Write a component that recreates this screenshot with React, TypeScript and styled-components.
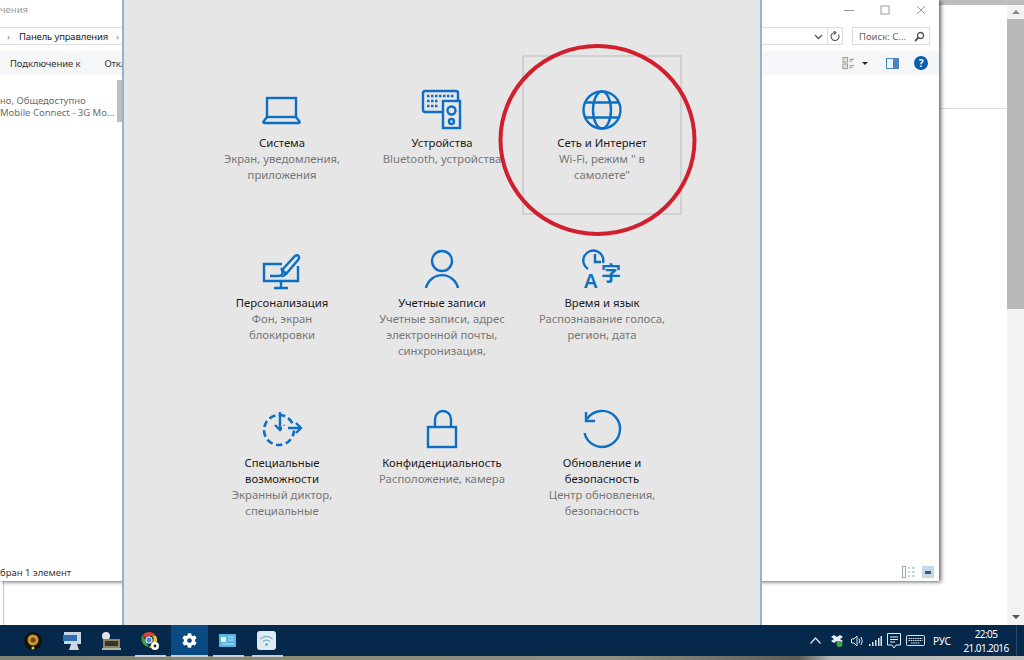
import React from "react";
import styled, { createGlobalStyle } from "styled-components";
import { FaCog } from "react-icons/fa";

const Global = createGlobalStyle`
  html, body { margin: 0; padding: 0; width: 1024px; height: 660px; overflow: hidden; background: #fff; }
  body { font-family: "Noto Sans", "Liberation Sans", sans-serif; font-size: 12px; }
  * { box-sizing: border-box; }
`;

const BLUE = "#0d6fc4";

const Page = styled.div`
  width: 1024px;
  height: 660px;
  display: flex;
  flex-direction: column;
  overflow: hidden;
`;
const Desktop = styled.div`
  position: relative;
  height: 625px;
  background: #fff;
  overflow: hidden;
`;
const BackTopStrip = styled.div`
  position: absolute;
  left: 939px;
  top: 0;
  width: 85px;
  height: 5px;
  background: #bdbdbd;
`;
const BackDivider = styled.div`
  position: absolute;
  left: 939px;
  top: 108px;
  width: 68px;
  height: 1px;
  background: #dcdcdc;
`;
const BackScrollbar = styled.div`
  position: absolute;
  left: 1007px;
  top: 5px;
  width: 17px;
  height: 620px;
  background: #f3f3f3;
  display: flex;
  flex-direction: column;
  align-items: center;
`;
const ScrollArrow = styled.div<{ $down?: boolean }>`
  width: 0;
  height: 0;
  margin: ${(p) => (p.$down ? "auto 0 6px" : "5px 0 5px")};
  border-left: 4px solid transparent;
  border-right: 4px solid transparent;
  ${(p) => (p.$down ? "border-top: 4px solid #555;" : "border-bottom: 4px solid #888;")}
`;
const ScrollThumb = styled.div`
  width: 100%;
  height: 290px;
  background: #b9b9b9;
`;
const BackEdge = styled.div`
  position: absolute;
  left: 3px;
  top: 581px;
  width: 1px;
  height: 44px;
  background: #c9c9c9;
`;

const Explorer = styled.section`
  position: absolute;
  left: 0;
  top: 0;
  width: 939px;
  height: 581px;
  background: #fff;
  box-shadow: 2px 1px 4px rgba(0, 0, 0, 0.6);
  display: flex;
  flex-direction: column;
  overflow: hidden;
  color: #1e1e1e;
`;
const TitleBar = styled.div`
  height: 27px;
  flex: none;
  display: flex;
  align-items: flex-start;
  justify-content: space-between;
  padding: 3px 11px 0 0;
`;
const TitleText = styled.span`
  font-size: 9.5px;
  line-height: 14px;
  color: #999;
`;
const WindowControls = styled.div`
  display: flex;
  gap: 22px;
  color: #9a9a9a;
`;
const AddressRow = styled.div`
  height: 18px;
  flex: none;
  display: flex;
  gap: 9px;
  padding-right: 9px;
`;
const AddressBox = styled.div`
  flex: 1;
  display: flex;
  align-items: center;
  border: 1px solid #dcdcdc;
  border-left: none;
  font-size: 9.5px;
  padding-left: 7px;
  gap: 8px;
`;
const Crumb = styled.span`
  color: #222;
  letter-spacing: -0.15px;
  margin-left: 1px;
`;
const CrumbSep = styled.span`
  color: #777;
`;
const AddressEnd = styled.div`
  margin-left: auto;
  display: flex;
  align-items: center;
  height: 100%;
`;
const RefreshCell = styled.div`
  margin-left: 4px;
  width: 15px;
  height: 100%;
  border-left: 1px solid #dcdcdc;
  display: flex;
  align-items: center;
  justify-content: center;
`;
const SearchBox = styled.div`
  width: 78px;
  border: 1px solid #dcdcdc;
  display: flex;
  align-items: center;
  justify-content: space-between;
  padding: 0 4px 0 6px;
  font-size: 9.5px;
  color: #666;
`;
const Toolbar = styled.div`
  margin-top: 6px;
  height: 24px;
  flex: none;
  display: flex;
  align-items: center;
  gap: 24px;
  padding: 0 11px 0 10px;
  background: #f5f6f7;
  font-size: 9.5px;
  letter-spacing: -0.1px;
  color: #333;
`;
const ToolbarEnd = styled.div`
  margin-left: auto;
  display: flex;
  align-items: center;
  gap: 6px;
`;
const Caret = styled.div`
  width: 0;
  height: 0;
  margin: 0 12px 0 1px;
  border-left: 3px solid transparent;
  border-right: 3px solid transparent;
  border-top: 3px solid #222;
`;
const HelpBadge = styled.div`
  margin-left: 9px;
  width: 14px;
  height: 14px;
  border-radius: 50%;
  background: #0b5cad;
  color: #fff;
  font-size: 10px;
  font-weight: 700;
  line-height: 14px;
  text-align: center;
`;
const FileList = styled.div`
  flex: 1;
  position: relative;
  padding-top: 20px;
  font-size: 9.5px;
  line-height: 12px;
  color: #6d6d6d;
`;
const FileLine = styled.div`
  white-space: nowrap;
`;
const ListThumb = styled.div`
  position: absolute;
  left: 117px;
  top: 5px;
  width: 5px;
  height: 42px;
  background: #bdbdbd;
`;
const StatusBar = styled.div`
  height: 18px;
  flex: none;
  display: flex;
  align-items: center;
  justify-content: space-between;
  padding-right: 5px;
  font-size: 9.5px;
  color: #333;
`;
const StatusIcons = styled.div`
  display: flex;
  gap: 7px;
`;

const SettingsWindow = styled.section`
  position: absolute;
  left: 122px;
  top: 0;
  width: 640px;
  height: 625px;
  background: #e6e6e6;
  border-left: 2px solid #8fb6d0;
  border-right: 2px solid #8fb6d0;
  padding: 55px 0 0 78px;
`;
const TileGrid = styled.div`
  display: grid;
  grid-template-columns: repeat(3, 160px);
  grid-auto-rows: 160px;
`;
const Tile = styled.div<{ $selected?: boolean }>`
  padding-top: 35px;
  display: flex;
  flex-direction: column;
  align-items: center;
  outline: ${(p) => (p.$selected ? "2px solid #d0d0d0" : "none")};
  outline-offset: -2px;
  text-align: center;
  font-size: 11.3px;
  line-height: 16px;
  white-space: nowrap;
`;
const TileIcon = styled.svg`
  width: 40px;
  height: 40px;
  margin-bottom: 5px;
  flex: none;
  fill: none;
  overflow: visible;
  stroke: ${BLUE};
  stroke-width: 2.4;
`;
const TileTitle = styled.div`
  color: #1c1c1c;
`;
const TileDesc = styled.div`
  color: #777;
`;
const Annotation = styled.svg`
  position: absolute;
  left: 490px;
  top: 35px;
  width: 220px;
  height: 210px;
  fill: none;
  pointer-events: none;
`;

const Taskbar = styled.footer`
  height: 31px;
  flex: none;
  background: #06284a;
  display: flex;
  align-items: stretch;
  padding-left: 13px;
  color: #fff;
`;
const Slot = styled.div<{ $active?: boolean; $running?: boolean }>`
  position: relative;
  width: ${(p) => (p.$active ? "37px" : "39px")};
  margin-left: ${(p) => (p.$active ? "2px" : "0")};
  display: flex;
  align-items: center;
  justify-content: center;
  background: ${(p) => (p.$active ? "#0a4a82" : "transparent")};
  ${(p) =>
    p.$running || p.$active
      ? `&::after {
    content: "";
    position: absolute;
    left: ${p.$active ? "0" : "5px"};
    right: ${p.$active ? "0" : "3px"};
    bottom: -1px;
    height: 2px;
    background: #c8d0d6;
  }`
      : ""}
`;
const Tray = styled.div`
  margin-left: auto;
  display: flex;
  align-items: center;
  gap: 5px;
`;
const TrayChevron = styled.svg`
  margin-right: 5px;
`;
const TrayBadge = styled.svg`
  margin-right: 3px;
`;
const TrayLang = styled.span`
  font-size: 10px;
  margin: 0 5px 0 3px;
`;
const Clock = styled.div`
  width: 50px;
  text-align: center;
  font-size: 10px;
  letter-spacing: -0.6px;
  line-height: 14px;
  white-space: nowrap;
`;
const ShowDesktop = styled.div`
  width: 8px;
  align-self: stretch;
  border-left: 1px solid #2b4a68;
`;
const Wallpaper = styled.div`
  height: 4px;
  flex: none;
  background: linear-gradient(90deg, #7d8176 0%, #8b8d74 30%, #8d8f82 60%, #5d5d58 78%, #b4b6b3 81%, #c1c2bf 100%);
`;

const Laptop = () => (
  <TileIcon viewBox="0 0 40 40">
    <rect x="5" y="8" width="29" height="19" />
    <path d="M5 27 L1.5 31.5 Q1 33 2.5 33 H36.5 Q38 33 37.5 31.5 L34 27" />
  </TileIcon>
);
const Devices = () => (
  <TileIcon viewBox="0 0 40 40">
    <path d="M20 22 H3 Q1 22 1 20 V3 Q1 1 3 1 H34 Q36 1 36 3 V10" />
    <rect x="21" y="11" width="17" height="27" />
    <circle cx="29.5" cy="20.5" r="4" />
    <circle cx="29.5" cy="31.5" r="2.5" />
    <path d="M5 6 H32 M5 11 H17 M5 16 H17" strokeDasharray="2.5 1.5" />
  </TileIcon>
);
const Globe = () => (
  <TileIcon viewBox="0 0 40 40">
    <circle cx="20" cy="20" r="18.5" />
    <ellipse cx="20" cy="20" rx="9" ry="18.5" />
    <path d="M4 12.5 H36 M4 27.5 H36" />
  </TileIcon>
);
const Brush = () => (
  <TileIcon viewBox="0 0 40 40">
    <path d="M20 14 H2 V31 H36 V16" />
    <path d="M19 38 V31 M12 38 H26" />
    <path d="M8 26 H16 Q22 26 20 20 L33 6 Q36 4 37 7 Q37.5 8 36 10 L24 24 Q20 27 20 26" />
    <path d="M19 18 L24 24" />
  </TileIcon>
);
const Person = () => (
  <TileIcon viewBox="0 0 40 40">
    <circle cx="20" cy="11" r="10" />
    <path d="M4 38 A16.5 17 0 0 1 36 38" />
  </TileIcon>
);
const TimeLang = () => (
  <TileIcon viewBox="0 0 40 40">
    <path d="M6 19 A10 10 0 1 1 21 13" />
    <path d="M13 4 V12 H19" />
    <text x="2" y="38" fontSize="20" fontWeight="600" fill={BLUE} stroke="none" fontFamily="Noto Sans, sans-serif">A</text>
    <text x="19" y="31" fontSize="20" fontWeight="700" fill={BLUE} stroke="none" fontFamily="Noto Sans CJK SC, sans-serif">字</text>
  </TileIcon>
);
const Access = () => (
  <TileIcon viewBox="0 0 40 40">
    <circle cx="17" cy="20" r="15" strokeWidth="2.6" strokeDasharray="6.5 3.5" />
    <path d="M18 2 V20" />
    <path d="M13 15 L18 20 L23 15" />
    <path d="M20 18 H38" stroke="#e6e6e6" strokeWidth="5" />
    <path d="M26 18 H38 M34 13 L39 18 L34 23" />
  </TileIcon>
);
const Lock = () => (
  <TileIcon viewBox="0 0 40 40">
    <rect x="6" y="17" width="28" height="20" />
    <path d="M13 17 V9 A8 8 0 0 1 29 9 V17" />
  </TileIcon>
);
const Refresh = () => (
  <TileIcon viewBox="0 0 40 40">
    <path d="M5 9 A18 18 0 1 1 2.5 23" />
    <path d="M4 2 V11 H13" />
  </TileIcon>
);

const TILES = [
  { Icon: Laptop, title: ["Система"], desc: ["Экран, уведомления,", "приложения"] },
  { Icon: Devices, title: ["Устройства"], desc: ["Bluetooth, устройства"] },
  { Icon: Globe, title: ["Сеть и Интернет"], desc: ["Wi-Fi, режим \" в", "самолете\""], selected: true },
  { Icon: Brush, title: ["Персонализация"], desc: ["Фон, экран", "блокировки"] },
  { Icon: Person, title: ["Учетные записи"], desc: ["Учетные записи, адрес", "электронной почты,", "синхронизация,"] },
  { Icon: TimeLang, title: ["Время и язык"], desc: ["Распознавание голоса,", "регион, дата"] },
  { Icon: Access, title: ["Специальные", "возможности"], desc: ["Экранный диктор,", "специальные"] },
  { Icon: Lock, title: ["Конфиденциальность"], desc: ["Расположение, камера"] },
  { Icon: Refresh, title: ["Обновление и", "безопасность"], desc: ["Центр обновления,", "безопасность"] },
];

const App = () => (
  <Page>
    <Global />
    <Desktop>
      <BackTopStrip />
      <BackDivider />
      <BackEdge />
      <BackScrollbar>
        <ScrollArrow />
        <ScrollThumb />
        <ScrollArrow $down />
      </BackScrollbar>

      <Explorer>
        <TitleBar>
          <TitleText>чения</TitleText>
          <WindowControls>
            <svg width="14" height="14" viewBox="0 0 14 14" stroke="currentColor" fill="none"><path d="M2 7.5 H12" /></svg>
            <svg width="14" height="14" viewBox="0 0 14 14" stroke="currentColor" fill="none"><rect x="3" y="3" width="8" height="8" /></svg>
            <svg width="14" height="14" viewBox="0 0 14 14" stroke="currentColor" fill="none"><path d="M3 3 L11 11 M11 3 L3 11" /></svg>
          </WindowControls>
        </TitleBar>
        <AddressRow>
          <AddressBox>
            <CrumbSep>›</CrumbSep>
            <Crumb>Панель управления</Crumb>
            <CrumbSep>›</CrumbSep>
            <AddressEnd>
              <svg width="9" height="9" viewBox="0 0 9 9" fill="none" stroke="#555" strokeWidth="1.3"><path d="M1 3 L4.5 6.5 L8 3" /></svg>
              <RefreshCell>
                <svg width="11" height="11" viewBox="0 0 11 11" fill="none" stroke="#555" strokeWidth="1.1"><path d="M5 1.5 A4 4 0 1 0 8.5 3.5" /><path d="M4 0 L6 1.5 L4 3.5" /></svg>
              </RefreshCell>
            </AddressEnd>
          </AddressBox>
          <SearchBox>
            Поиск: С...
            <svg width="11" height="11" viewBox="0 0 11 11" fill="none" stroke="#555" strokeWidth="1.3"><circle cx="6.5" cy="4.5" r="3" /><path d="M4.5 6.5 L1 10" strokeWidth="1.8" /></svg>
          </SearchBox>
        </AddressRow>
        <Toolbar>
          <span>Подключение к</span>
          <span>Отключение</span>
          <ToolbarEnd>
            <svg width="13" height="14" viewBox="0 0 14 14" fill="none"><rect x="1" y="1" width="5" height="5" fill="#dfe6c8" stroke="#99a" /><rect x="1" y="8" width="5" height="5" fill="#dfe6c8" stroke="#99a" /><path d="M8 3 H13 M8 5 H11 M8 10 H13 M8 12 H11" stroke="#888" /></svg>
            <Caret />
            <svg width="13" height="11" viewBox="0 0 13 11"><rect width="13" height="11" fill="#4a86bd" /><rect x="1" y="1" width="6" height="9" fill="#eef3f8" /></svg>
            <HelpBadge>?</HelpBadge>
          </ToolbarEnd>
        </Toolbar>
        <FileList>
          <ListThumb />
          <FileLine>но, Общедоступно</FileLine>
          <FileLine>Mobile Connect - 3G Mo...</FileLine>
        </FileList>
        <StatusBar>
          <span>бран 1 элемент</span>
          <StatusIcons>
            <svg width="13" height="12" viewBox="0 0 13 12" fill="none" stroke="#9aa"><rect x="0.5" y="0.5" width="3" height="11" /><path d="M6 2 H8 M10 2 H13 M6 6 H8 M10 6 H13 M6 10 H8 M10 10 H13" /></svg>
            <svg width="12" height="12" viewBox="0 0 12 12"><rect width="12" height="12" fill="#c3d8e8" /><rect x="3" y="5" width="6" height="3" fill="#46586a" /></svg>
          </StatusIcons>
        </StatusBar>
      </Explorer>

      <SettingsWindow>
        <TileGrid>
          {TILES.map(({ Icon, title, desc, selected }) => (
            <Tile key={title[0]} $selected={selected}>
              <Icon />
              {title.map((t) => <TileTitle key={t}>{t}</TileTitle>)}
              {desc.map((d) => <TileDesc key={d}>{d}</TileDesc>)}
            </Tile>
          ))}
        </TileGrid>
      </SettingsWindow>

      <Annotation viewBox="0 0 220 210">
        <ellipse cx="107.5" cy="105" rx="97" ry="94" stroke="#d21f2e" strokeWidth="4" />
      </Annotation>
    </Desktop>

    <Taskbar>
      <Slot>
        <svg width="18" height="18" viewBox="0 0 18 18"><circle cx="9" cy="9" r="9" fill="#14110c" /><circle cx="9" cy="8" r="5.5" fill="#c9982e" /><circle cx="9" cy="8" r="2.5" fill="#7b3f12" /><circle cx="9" cy="16" r="1.5" fill="#e3c15a" /></svg>
      </Slot>
      <Slot>
        <svg width="20" height="20" viewBox="0 0 20 20"><rect x="2" y="1" width="17" height="12" fill="#c4d6e8" /><rect x="1" y="4" width="14" height="6" fill="#2f6eae" /><path d="M9 13 H15 L17 19 H7 Z" fill="#cfd5db" /></svg>
      </Slot>
      <Slot>
        <svg width="20" height="20" viewBox="0 0 20 20"><circle cx="5" cy="5" r="4" fill="#dfe3e5" /><rect x="2" y="8" width="17" height="9" fill="#8d8468" /><rect x="4" y="10" width="13" height="5" fill="#39332a" /><rect x="1" y="17" width="19" height="2" fill="#b2b4ad" /></svg>
      </Slot>
      <Slot $running>
        <svg width="20" height="20" viewBox="0 0 20 20">
          <path d="M9 1 A8 8 0 0 1 16 5 H9 A4 4 0 0 0 5.5 7 L2.5 4 A8 8 0 0 1 9 1Z" fill="#d8402f" />
          <path d="M2.5 4 L5.8 10 L9 15.9 A8 8 0 0 1 2.5 4Z" fill="#3a9c46" />
          <path d="M16 5 A8 8 0 0 1 9 17 L12.5 11 A4 4 0 0 0 12 5Z" fill="#f2c230" />
          <circle cx="9" cy="9" r="3.2" fill="#4d83d6" stroke="#fff" />
          <circle cx="15" cy="15" r="4" fill="#fff" />
          <circle cx="15" cy="15" r="1.4" fill="#222" />
        </svg>
      </Slot>
      <Slot $active>
        <FaCog size={15} color="#fff" />
      </Slot>
      <Slot $running>
        <svg width="17" height="13" viewBox="0 0 17 13"><rect width="17" height="13" fill="#59b2e2" /><rect x="2" y="3" width="5" height="5" fill="#e5f2d8" /><path d="M9 3 H15 M9 6 H15 M3 10 H15" stroke="#bfe3f5" /></svg>
      </Slot>
      <Slot $running>
        <svg width="19" height="19" viewBox="0 0 19 19" fill="none"><rect width="19" height="19" rx="3" fill="#dfeaf2" /><path d="M3.5 8 A8.5 8.5 0 0 1 15.5 8 M6 10.5 A5 5 0 0 1 13 10.5" stroke="#4e9bd0" /><circle cx="9.5" cy="13.5" r="1.2" fill="#4e9bd0" /></svg>
      </Slot>
      <Tray>
        <TrayChevron width="11" height="7" viewBox="0 0 11 7" fill="none" stroke="#dfe6ec" strokeWidth="1.2"><path d="M0.5 6.5 L5.5 1 L10.5 6.5" /></TrayChevron>
        <TrayBadge width="12" height="13" viewBox="0 0 12 13"><path d="M0 3 L3 1 L6 3 L9 1 L12 3 L9 5 L12 7 L9 9 L6 7 L3 9 L0 7 L3 5Z" fill="#e8eef2" /><circle cx="8.5" cy="10" r="3" fill="#3da548" /></TrayBadge>
        <svg width="13" height="12" viewBox="0 0 13 12" fill="none" stroke="#dfe6ec"><path d="M0.5 4 H3 L6 1 V11 L3 8 H0.5Z" /><path d="M8 3.5 Q9.5 6 8 8.5 M10 2 Q12.5 6 10 10" /></svg>
        <svg width="13" height="10" viewBox="0 0 13 10" fill="#dfe6ec"><rect x="0" y="8" width="1.5" height="2" /><rect x="3" y="6" width="1.5" height="4" /><rect x="6" y="4" width="1.5" height="6" /><rect x="9" y="2" width="1.5" height="8" /><rect x="11.5" y="0" width="1.5" height="10" /></svg>
        <svg width="14" height="16" viewBox="0 0 14 16" fill="none" stroke="#e6ecf1"><path d="M0.5 0.5 H13.5 V12 H9 L7 15 L5 12 H0.5Z" /><path d="M3 4 H11 M3 6.5 H11 M3 9 H8" /></svg>
        <svg width="19" height="11" viewBox="0 0 19 11" fill="none" stroke="#dfe6ec"><rect x="0.5" y="0.5" width="18" height="10" rx="1" /><path d="M2.5 3.5 H16.5 M2.5 5.5 H16.5 M5 8 H14" strokeDasharray="1.5 0.7" /></svg>
        <TrayLang>РУС</TrayLang>
        <Clock>
          22:05
          <br />
          21.01.2016
        </Clock>
        <ShowDesktop />
      </Tray>
    </Taskbar>
    <Wallpaper />
  </Page>
);

export default App;
